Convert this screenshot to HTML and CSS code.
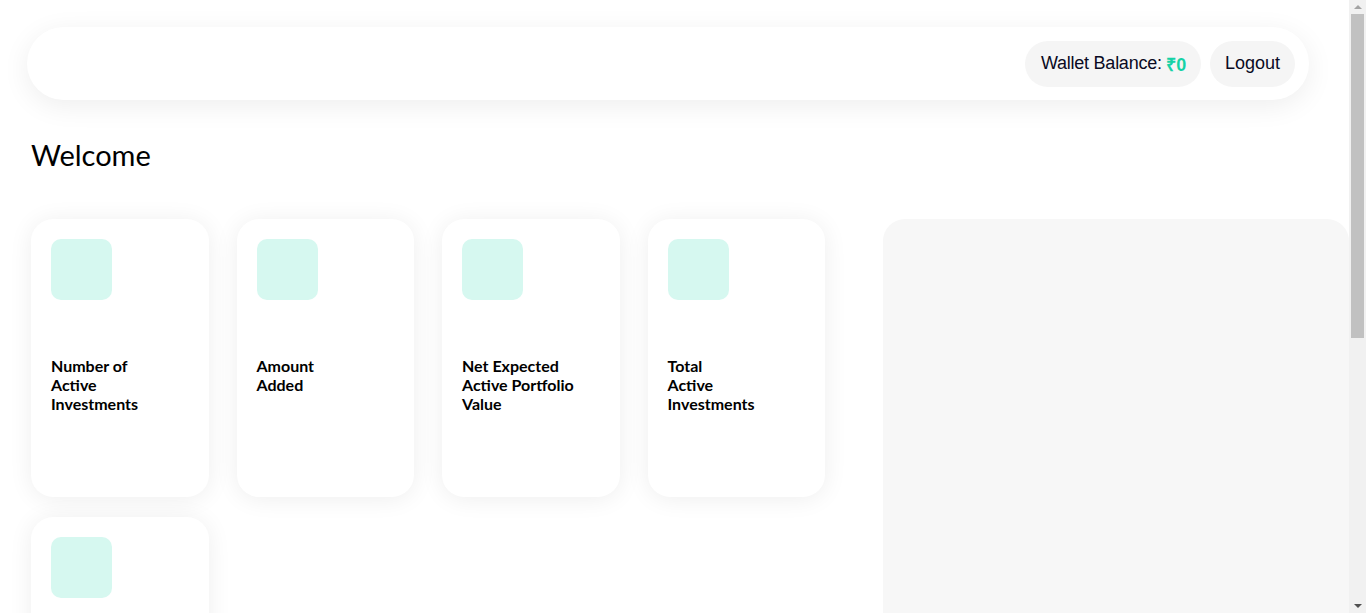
FILE: index.html
```html
<!DOCTYPE html>
<html lang="en">
<head>
<meta charset="utf-8">
<title>Dashboard</title>
<link rel="stylesheet" href="styles.css">
</head>
<body>
<div class="page">
  <header class="topbar">
    <div class="pill wallet">Wallet Balance: <span class="amount">₹0</span></div>
    <div class="pill logout">Logout</div>
  </header>
  <h1 class="welcome">Welcome</h1>
  <main class="main">
    <section class="cards">
      <div class="card"><div class="card-icon"></div><div class="card-title">Number of<br>Active<br>Investments</div></div>
      <div class="card"><div class="card-icon"></div><div class="card-title">Amount<br>Added</div></div>
      <div class="card"><div class="card-icon"></div><div class="card-title">Net Expected<br>Active Portfolio<br>Value</div></div>
      <div class="card"><div class="card-icon"></div><div class="card-title">Total<br>Active<br>Investments</div></div>
      <div class="card"><div class="card-icon"></div></div>
    </section>
    <aside class="panel"></aside>
  </main>
</div>
<div class="scrollbar">
  <div class="arrow up"></div>
  <div class="track"><div class="thumb"></div></div>
  <div class="arrow down"></div>
</div>
</body>
</html>
```
FILE: styles.css
```css
html, body {
  margin: 0;
  padding: 0;
  background: #ffffff;
}
body {
  font-family: "Liberation Sans", Arial, sans-serif;
  color: #0a0a23;
}
.page {
  width: 1349px;
  padding-bottom: 28px;
  overflow: hidden;
}
.topbar {
  margin: 27px 40px 0 27px;
  height: 73px;
  border-radius: 37px;
  background: #ffffff;
  box-shadow: 0 6px 28px rgba(0, 0, 0, 0.07);
  display: flex;
  justify-content: flex-end;
  align-items: center;
  gap: 9px;
  padding-right: 14px;
}
.pill {
  height: 46px;
  border-radius: 23px;
  background: #f5f5f5;
  display: flex;
  align-items: center;
  font-size: 18px;
  color: #0a0a23;
}
.wallet {
  padding: 0 15px 0 16px;
  white-space: pre;
  letter-spacing: -0.25px;
}
.amount {
  color: #16d2a6;
  font-weight: bold;
}
.logout {
  padding: 0 15px;
}
.welcome {
  font-family: Lato, sans-serif;
  font-weight: 400;
  font-size: 29px;
  margin: 35px 0 0 31px;
  line-height: 40px;
  color: #000000;
}
.main {
  display: grid;
  grid-template-columns: 794px 466px;
  column-gap: 58px;
  margin: 44px 0 0 31px;
  align-items: start;
}
.cards {
  display: grid;
  grid-template-columns: repeat(4, 1fr);
  column-gap: 28px;
  row-gap: 20px;
}
.card {
  height: 278px;
  box-sizing: border-box;
  border-radius: 22px;
  background: #ffffff;
  box-shadow: 0 2px 24px rgba(0, 0, 0, 0.07);
  padding: 20px;
}
.card-icon {
  width: 61px;
  height: 61px;
  border-radius: 10px;
  background: #d6f8f0;
}
.card-title {
  margin-top: 56px;
  font-family: Lato, sans-serif;
  font-weight: 700;
  font-size: 16px;
  line-height: 19px;
  color: #000000;
}
.panel {
  height: 860px;
  border-radius: 22px;
  background: #f7f7f7;
}
.scrollbar {
  position: fixed;
  top: 0;
  right: 0;
  width: 17px;
  height: 100vh;
  background: #f1f1f1;
  display: flex;
  flex-direction: column;
}
.arrow {
  height: 14px;
  display: flex;
  align-items: center;
  justify-content: center;
}
.arrow::before {
  content: "";
  width: 0;
  height: 0;
  border-left: 4px solid transparent;
  border-right: 4px solid transparent;
}
.arrow.up::before {
  border-bottom: 4px solid #a3a3a3;
}
.arrow.down::before {
  border-top: 4px solid #505050;
}
.track {
  flex: 1;
  padding: 0 2px;
}
.thumb {
  height: 324px;
  background: #c1c1c1;
}
```
